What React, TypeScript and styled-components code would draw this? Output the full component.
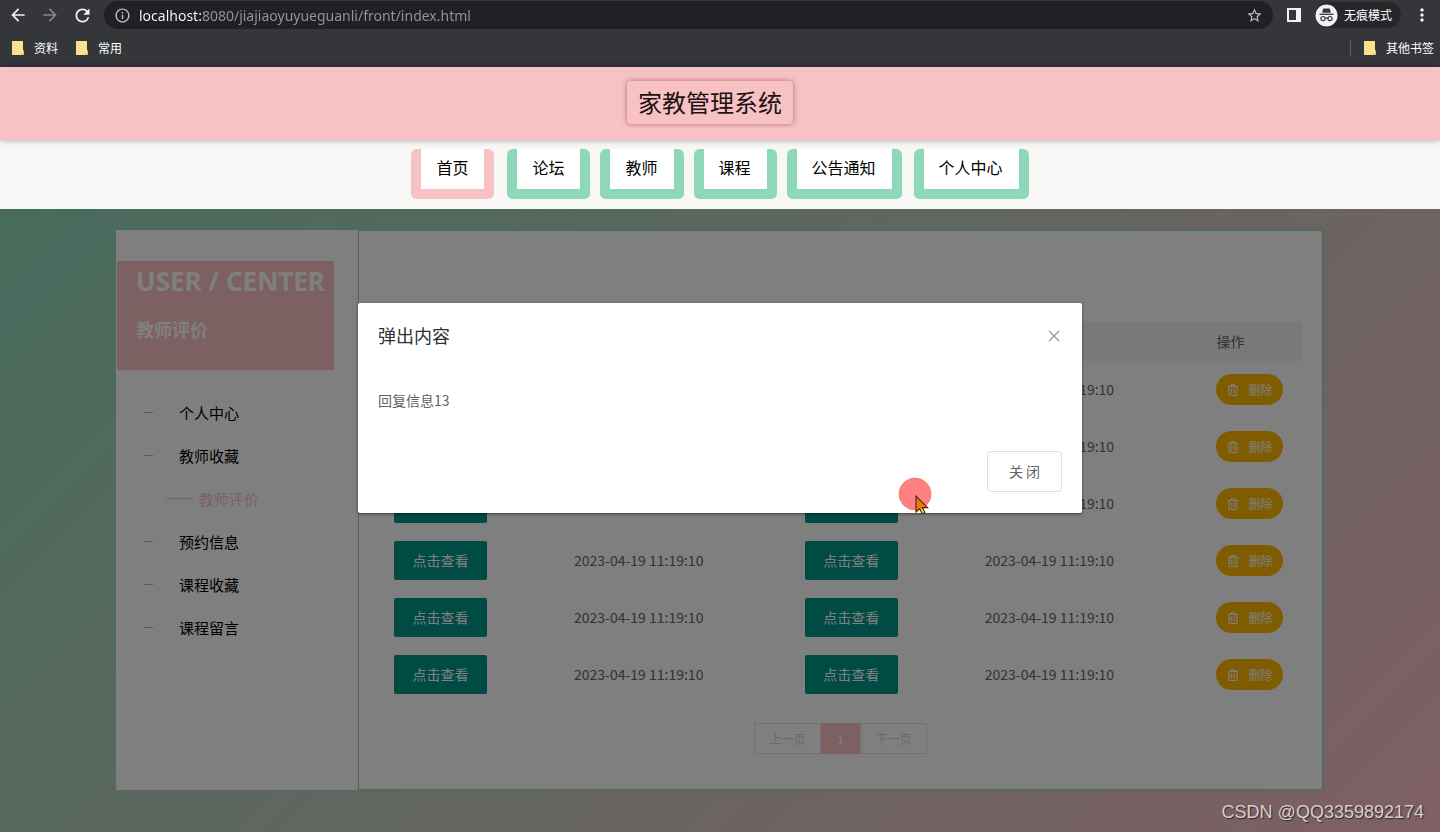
import React from 'react';
import styled, { createGlobalStyle } from 'styled-components';
import {
  MdArrowBack,
  MdArrowForward,
  MdInfoOutline,
  MdMoreVert,
  MdRefresh,
  MdStarBorder,
} from 'react-icons/md';
import { FaRegTrashAlt } from 'react-icons/fa';

const pink = '#f8c1c4';
const green = '#8ed8b9';
const cjk = '"Noto Sans CJK SC", sans-serif';
const latin = '"Noto Sans", "Noto Sans CJK SC", sans-serif';

const GlobalStyle = createGlobalStyle`
  * { box-sizing: border-box; }
  body { margin: 0; font-family: ${cjk}; font-size: 14px; color: #666; }
  button, input { font: inherit; color: inherit; border: 0; padding: 0; background: none; }
  button { cursor: pointer; }
  a { color: inherit; text-decoration: none; }
  h1, h2, p { margin: 0; font-weight: 400; }
  ul { list-style: none; margin: 0; padding: 0; }
  svg { display: block; }
`;

const Page = styled.div`
  min-height: 100vh;
  display: flex;
  flex-direction: column;
`;

/* Browser chrome */

const Chrome = styled.div`
  height: 67px;
  background: #35363a;
  color: #f1f3f4;
`;

const Toolbar = styled.div`
  height: 30px;
  display: flex;
  align-items: center;
  padding: 0 8px;
`;

const ToolButton = styled.button<{ $dim?: boolean }>`
  width: 32px;
  display: flex;
  color: ${(p) => (p.$dim ? '#85868a' : '#f1f3f4')};
`;

const AddressBar = styled.label`
  flex: 1;
  height: 28px;
  margin-right: 14px;
  padding: 0 10px;
  display: flex;
  align-items: center;
  gap: 8px;
  border-radius: 14px;
  background: #202124;
  color: #bdc1c6;
`;

const AddressInput = styled.input`
  flex: 1;
  min-width: 0;
  height: 24px;
  font-family: ${latin};
  font-size: 14px;
  outline: none;
  color: transparent;
  background: linear-gradient(90deg, #fff 62px, #94979b 62px);
  background-clip: text;
  -webkit-background-clip: text;
`;

const PlainButton = styled.button`
  display: flex;
`;

const Incognito = styled.button`
  height: 26px;
  margin: 0 11px 0 14px;
  padding-right: 9px;
  display: flex;
  align-items: center;
  gap: 6px;
  border-radius: 13px;
  background: #26272a;
  color: #fff;
  font-size: 12px;
  line-height: 24px;
`;

const Bookmarks = styled.div`
  height: 36px;
  display: flex;
  align-items: center;
  gap: 17px;
  padding: 0 6px 0 11px;
`;

const Bookmark = styled.a`
  display: flex;
  align-items: center;
  gap: 9px;
  color: #fff;
  font-size: 12px;
  line-height: 16px;
`;

const OtherBookmarks = styled.div`
  margin-left: auto;
  padding-left: 12px;
  border-left: 1px solid #5f6064;
`;

/* Site header */

const Header = styled.header`
  position: relative;
  height: 73px;
  display: flex;
  justify-content: center;
  align-items: center;
  padding: 0 20px 2px 0;
  background: ${pink};
  box-shadow: 0 0 6px rgba(0, 0, 0, 0.35);
`;

const SiteTitle = styled.h1`
  height: 43px;
  padding: 0 11px;
  border-radius: 4px;
  box-shadow: 0 0 5px rgba(90, 20, 20, 0.5);
  color: #1c1212;
  font-size: 24px;
  line-height: 41px;
`;

const Nav = styled.nav`
  height: 69px;
  display: flex;
  justify-content: center;
  align-items: flex-start;
  gap: 10px;
  padding-top: 9px;
  background: #f7f7f6;
`;

const Tab = styled.a<{ $active?: boolean }>`
  height: 50px;
  padding: 0 16px 0 15px;
  border: 10px solid ${(p) => (p.$active ? pink : green)};
  border-top: 0;
  border-radius: 6px;
  background: #fff;
  color: #000;
  font-size: 16px;
  line-height: 37px;
  &:first-child { margin-right: 3px; }
  &:last-child { margin-left: 2px; }
`;

/* Main area */

const Main = styled.main`
  position: relative;
  flex: 1;
  padding: 21px 117px 42px 116px;
  background: linear-gradient(135deg, ${green} 0%, #ffbfc8 100%);
`;

const Columns = styled.div`
  display: flex;
  min-height: 560px;
`;

const Sidebar = styled.aside`
  width: 242px;
  flex: none;
  padding: 31px 24px 0 1px;
  background: #fff;
`;

const SideTitle = styled.div`
  height: 109px;
  padding: 3px 0 0 19px;
  background: ${pink};
  color: #fff;
  font-weight: 700;
  white-space: nowrap;
`;

const SideName = styled.p`
  font-family: ${latin};
  font-size: 26px;
  font-weight: 700;
  line-height: 34px;
`;

const SideSection = styled.h2`
  padding-top: 17px;
  font-size: 18px;
  font-weight: 700;
  line-height: 28px;
`;

const SideMenu = styled.ul`
  padding: 21px 0 0 27px;
`;

const SideLink = styled.a<{ $active?: boolean }>`
  height: 43px;
  display: flex;
  align-items: center;
  gap: ${(p) => (p.$active ? 6 : 26)}px;
  padding-left: ${(p) => (p.$active ? 22 : 0)}px;
  color: ${(p) => (p.$active ? pink : '#000')};
  font-size: 15px;
  line-height: 24px;
  &::before {
    content: '';
    width: ${(p) => (p.$active ? 27 : 9)}px;
    height: 1px;
    background: ${(p) => (p.$active ? pink : '#b4b4b4')};
  }
`;

const Panel = styled.section`
  flex: 1;
  padding: 91px 20px 35px;
  border: 1px solid ${green};
  background: #fff;
  box-shadow: 1px 0 4px rgba(142, 216, 185, 0.6);
`;

const Table = styled.table`
  width: 100%;
  table-layout: fixed;
  border-collapse: collapse;
  text-align: left;
`;

const Col = styled.col<{ $share: number }>`
  width: ${(p) => p.$share}%;
`;

const HeadCell = styled.th`
  height: 39px;
  padding: 0 15px 2px;
  background: #f2f2f2;
  font-weight: 400;
`;

const Cell = styled.td`
  height: 57px;
  padding: 0 15px;
  white-space: nowrap;
`;

const TimeCell = styled(Cell)`
  padding-bottom: 2px;
`;

const ViewButton = styled.button`
  display: block;
  width: 93px;
  height: 39px;
  padding-bottom: 2px;
  border-radius: 2px;
  background: #009688;
  color: #fff;
`;

const DeleteButton = styled.button`
  width: 67px;
  height: 31px;
  display: flex;
  justify-content: center;
  align-items: center;
  gap: 9px;
  border-radius: 16px;
  background: #ffb800;
  color: #fff;
  font-size: 12px;
  line-height: 30px;
`;

const Pager = styled.nav`
  display: flex;
  justify-content: center;
  padding-top: 20px;
`;

const PageButton = styled.button<{ $current?: boolean }>`
  width: ${(p) => (p.$current ? 39 : 67)}px;
  height: 31px;
  border: 1px solid ${(p) => (p.$current ? pink : '#e2e2e2')};
  background: ${(p) => (p.$current ? pink : '#fff')};
  color: ${(p) => (p.$current ? '#fff' : '#d2d2d2')};
  font-size: 12px;
`;

/* Dialog and what lies above the page */

const Shade = styled.div`
  position: absolute;
  inset: 0;
  display: flex;
  justify-content: center;
  align-items: flex-start;
  padding-top: 94px;
  background: rgba(0, 0, 0, 0.5);
`;

const Dialog = styled.div`
  width: 724px;
  max-width: 90%;
  border-radius: 2px;
  background: #fff;
  box-shadow: 0 1px 3px rgba(0, 0, 0, 0.5);
`;

const DialogHead = styled.div`
  height: 65px;
  display: flex;
  justify-content: space-between;
  align-items: center;
  padding: 0 20px;
  color: #303133;
`;

const DialogTitle = styled.h2`
  padding-bottom: 2px;
  font-size: 18px;
  line-height: 26px;
`;

const DialogText = styled.p`
  padding: 21px 20px 23px;
  color: #606266;
  line-height: 22px;
`;

const DialogFoot = styled.div`
  display: flex;
  justify-content: flex-end;
  padding: 17px 20px 21px;
`;

const CloseButton = styled.button`
  width: 75px;
  height: 41px;
  padding-bottom: 2px;
  border: 1px solid #dcdfe6;
  border-radius: 4px;
  color: #606266;
`;

const Pointer = styled.svg`
  position: absolute;
  left: 898px;
  top: 268px;
`;

const Watermark = styled.div`
  position: absolute;
  right: 16px;
  bottom: 9px;
  color: #d4d0d0;
  font-family: "Liberation Sans", sans-serif;
  font-size: 18px;
  line-height: 22px;
  text-shadow: 1px 1px 1px rgba(0, 0, 0, 0.6);
`;

const FolderIcon = () => (
  <svg width="14" height="16" viewBox="0 0 14 16" aria-hidden="true">
    <path d="M1 1h11v9l1 1v4H1z" fill="#fbe18a" />
    <path d="M10 11h3v4h-3z" fill="#e9c25c" />
    <path d="M11 10v4" stroke="#fff3c2" />
  </svg>
);

const SidePanelIcon = () => (
  <svg width="14" height="14" viewBox="0 0 14 14" aria-hidden="true">
    <path d="M0 0h14v14H0zM2 2v10h7V2z" fill="#f1f3f4" fillRule="evenodd" />
  </svg>
);

const IncognitoIcon = () => (
  <svg width="23" height="23" viewBox="0 0 23 23" aria-hidden="true">
    <circle cx="11.5" cy="11.5" r="11" fill="#f1f3f4" />
    <path d="M8.3 4.6h6.4l1.2 4.2H7.1z" fill="#35363a" />
    <path d="M4.5 10.3h14" stroke="#35363a" strokeWidth="1.3" />
    <g fill="none" stroke="#35363a" strokeWidth="1.2">
      <circle cx="8" cy="14.6" r="2.1" />
      <circle cx="15" cy="14.6" r="2.1" />
      <path d="M10.1 14.3q1.4-.8 2.8 0" />
    </g>
  </svg>
);

const tabs = ['首页', '论坛', '教师', '课程', '公告通知', '个人中心'];
const menu = ['个人中心', '教师收藏', '教师评价', '预约信息', '课程收藏', '课程留言'];
const times = Array.from({ length: 6 }, () => '2023-04-19 11:19:10');

export default function App() {
  return (
    <Page>
      <GlobalStyle />
      <Chrome>
        <Toolbar>
          <ToolButton aria-label="后退"><MdArrowBack size={20} /></ToolButton>
          <ToolButton $dim aria-label="前进"><MdArrowForward size={20} /></ToolButton>
          <ToolButton aria-label="刷新"><MdRefresh size={21} /></ToolButton>
          <AddressBar>
            <MdInfoOutline size={17} />
            <AddressInput
              aria-label="地址"
              defaultValue="localhost:8080/jiajiaoyuyueguanli/front/index.html"
            />
            <PlainButton aria-label="收藏"><MdStarBorder size={17} /></PlainButton>
          </AddressBar>
          <PlainButton aria-label="侧边栏"><SidePanelIcon /></PlainButton>
          <Incognito><IncognitoIcon />无痕模式</Incognito>
          <PlainButton aria-label="菜单"><MdMoreVert size={20} /></PlainButton>
        </Toolbar>
        <Bookmarks>
          <Bookmark href="#"><FolderIcon />资料</Bookmark>
          <Bookmark href="#"><FolderIcon />常用</Bookmark>
          <OtherBookmarks>
            <Bookmark href="#"><FolderIcon />其他书签</Bookmark>
          </OtherBookmarks>
        </Bookmarks>
      </Chrome>

      <Header><SiteTitle>家教管理系统</SiteTitle></Header>
      <Nav>
        {tabs.map((name, i) => (
          <Tab key={name} href="#" $active={i === 0}>{name}</Tab>
        ))}
      </Nav>

      <Main>
        <Columns>
          <Sidebar>
            <SideTitle>
              <SideName>USER / CENTER</SideName>
              <SideSection>教师评价</SideSection>
            </SideTitle>
            <SideMenu>
              {menu.map((name, i) => (
                <li key={name}><SideLink href="#" $active={i === 2}>{name}</SideLink></li>
              ))}
            </SideMenu>
          </Sidebar>
          <Panel>
            <Table>
              <colgroup>
                <Col $share={19.5} />
                <Col $share={25} />
                <Col $share={19.5} />
                <Col $share={25.1} />
                <Col $share={10.9} />
              </colgroup>
              <thead>
                <tr>
                  <HeadCell /><HeadCell /><HeadCell /><HeadCell />
                  <HeadCell scope="col">操作</HeadCell>
                </tr>
              </thead>
              <tbody>
                {times.map((time, i) => (
                  <tr key={i}>
                    <Cell><ViewButton>点击查看</ViewButton></Cell>
                    <TimeCell>{time}</TimeCell>
                    <Cell><ViewButton>点击查看</ViewButton></Cell>
                    <TimeCell>{time}</TimeCell>
                    <Cell>
                      <DeleteButton><FaRegTrashAlt size={12} />删除</DeleteButton>
                    </Cell>
                  </tr>
                ))}
              </tbody>
            </Table>
            <Pager>
              <PageButton>上一页</PageButton>
              <PageButton $current>1</PageButton>
              <PageButton>下一页</PageButton>
            </Pager>
          </Panel>
        </Columns>

        <Shade>
          <Dialog role="dialog" aria-modal="true" aria-labelledby="dialog-title">
            <DialogHead>
              <DialogTitle id="dialog-title">弹出内容</DialogTitle>
              <PlainButton aria-label="关闭">
                <svg width="16" height="16" viewBox="0 0 16 16" aria-hidden="true">
                  <path d="M3 3l10 10M13 3L3 13" stroke="#909399" strokeWidth="1.1" />
                </svg>
              </PlainButton>
            </DialogHead>
            <DialogText>回复信息13</DialogText>
            <DialogFoot><CloseButton>关 闭</CloseButton></DialogFoot>
          </Dialog>
        </Shade>
        <Pointer width="34" height="38" viewBox="0 0 34 38" aria-hidden="true">
          <circle cx="17" cy="17" r="16" fill="#ff8080" stroke="#e06a6a" strokeWidth="0.6" />
          <path
            d="M18 19v16l3.6-3.2 2.6 5 2.6-1.2-2.4-5h5.2z"
            fill="#e67a14"
            stroke="#4a2008"
            strokeWidth="1.1"
          />
          <path d="M22.6 32.4l2 3.8 1.4-.7-1.8-3.8z" fill="#f5e020" />
        </Pointer>
        <Watermark>CSDN @QQ3359892174</Watermark>
      </Main>
    </Page>
  );
}
